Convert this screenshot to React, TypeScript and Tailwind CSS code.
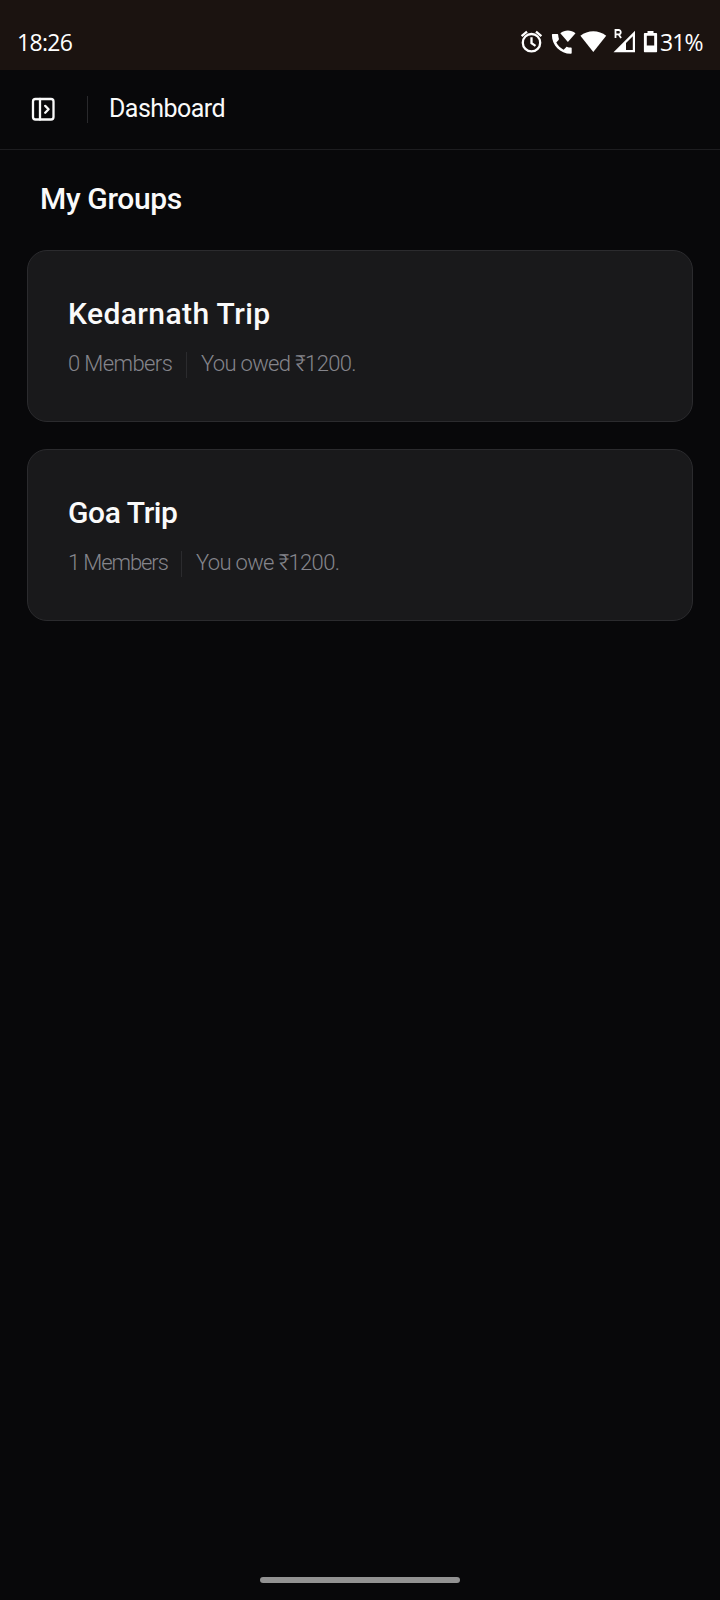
import React from "react";

function StatusIcons() {
  return (
    <svg width="140" height="30" viewBox="520 27 140 30" fill="none" aria-hidden="true">
      <g stroke="#fff" strokeWidth="2.3">
        <circle cx="531.5" cy="42.700" r="8.700" />
        <path d="M531.500 37.200v6l4 2.700" />
        <path d="M521.600 36.200l5.400-4.500M541.400 36.200l-5.400-4.500" />
      </g>
      <g fill="#fff">
        <path d="M567.900 42l-7.600-8.800c4.400-3.600 10.800-3.600 15.200 0z" />
        <path d="M552.900 34h4.300c.6 0 1 .4 1 1 .1 1.400.3 2.600.7 3.800.1.400 0 .8-.3 1.100l-2.300 2.700c1.700 3.200 4.200 5.500 7.300 7.100l2.500-2.500c.3-.3.7-.4 1.100-.3 1.100.4 2.300.6 3.500.6.600 0 1 .4 1 1v4.300c0 .6-.4 1-1 1-10.400 0-18.800-8.400-18.800-18.800 0-.6.400-1 1-1z" />
        <path d="M593.300 52l-12.900-16.200c7.300-6.200 18.500-6.200 25.800 0z" />
        <path fillRule="evenodd" d="M613.500 52.200L635 30.800v21.400zM626 43v7h6.800V36.200z" />
        <path fillRule="evenodd" d="M647.500 33v-2h6v2h2.600c.6 0 1 .4 1 1v17.200c0 .6-.4 1-1 1h-11.200c-.6 0-1-.4-1-1V34c0-.6.4-1 1-1zM646.800 35.700v9.800h7.400v-9.800z" />
      </g>
      <path d="M615.500 38v-8h3.100a2.100 2.100 0 0 1 0 4.300h-3M618.500 34.300l2.600 3.700" stroke="#fff" strokeWidth="1.8" />
    </svg>
  );
}

function PanelIcon() {
  return (
    <svg className="mb-[2px] size-7 shrink-0" viewBox="0 0 28 28" fill="none" stroke="#fafafa" strokeWidth="2.3" strokeLinecap="round" strokeLinejoin="round" aria-hidden="true">
      <rect x="4" y="4" width="20.500" height="20.500" rx="2.500" />
      <path d="M11 4v20.500M16.200 10.900l3.400 3.400-3.400 3.400" />
    </svg>
  );
}

type Group = {
  name: string;
  nameClass: string;
  members: string;
  membersClass: string;
  balance: string;
};

const groups: Group[] = [
  {
    name: "Kedarnath Trip",
    nameClass: "tracking-[0.4px]",
    members: "0 Members",
    membersClass: "w-[118px] tracking-[-0.6px]",
    balance: "You owed ₹1200.",
  },
  {
    name: "Goa Trip",
    nameClass: "tracking-[-0.4px]",
    members: "1 Members",
    membersClass: "w-[113px] tracking-[-1.1px]",
    balance: "You owe ₹1200.",
  },
];

function GroupCard({ group }: { group: Group }) {
  return (
    <article className="h-[172px] rounded-[20px] border border-[#2b2b2e] bg-[#19191b] pt-[42px] pl-[40px]">
      <h2 className={`text-[30px] leading-[42px] font-medium whitespace-nowrap text-[#fafafa] ${group.nameClass}`}>{group.name}</h2>
      <div className="mt-[17px] flex h-[26px] text-[22px] leading-[24px] font-light whitespace-nowrap text-[#85858c]">
        <span className={group.membersClass}>{group.members}</span>
        <span className="w-px bg-[#2b2b2e]" />
        <span className="pl-[14px] tracking-[-0.68px]">{group.balance}</span>
      </div>
    </article>
  );
}

export default function App() {
  return (
    <div className="flex h-[1600px] w-[720px] flex-col overflow-hidden bg-[#08080a] font-['Roboto','Noto_Sans',sans-serif] text-[#fafafa]">
      <div className="flex h-[70px] shrink-0 items-start bg-[#1b1310] pt-[27px] pl-[17px] font-['Open_Sans',sans-serif] text-[23px] leading-[30px] text-white">
        <span className="w-[503px] tracking-[-0.7px]">18:26</span>
        <StatusIcons />
        <span className="tracking-[-0.9px]">31%</span>
      </div>
      <header className="flex h-20 shrink-0 items-center border-b border-[#1d1d20] pl-[29px]">
        <PanelIcon />
        <span className="ml-[30px] h-[27px] w-px bg-[#29292c]" />
        <h1 className="mb-[2px] ml-[21px] text-[25px] leading-[30px] tracking-[-0.55px]">Dashboard</h1>
      </header>
      <main className="flex flex-1 flex-col px-[27px] pt-[28px]">
        <h2 className="pl-[13px] text-[30px] leading-[42px] font-medium tracking-[-0.35px]">My Groups</h2>
        <div className="mt-[30px] flex flex-col gap-[27px]">
          {groups.map((g) => (
            <GroupCard key={g.name} group={g} />
          ))}
        </div>
      </main>
      <div className="flex h-[23px] shrink-0 justify-center">
        <div className="h-[6px] w-[200px] rounded-full bg-[#929292]" />
      </div>
    </div>
  );
}
